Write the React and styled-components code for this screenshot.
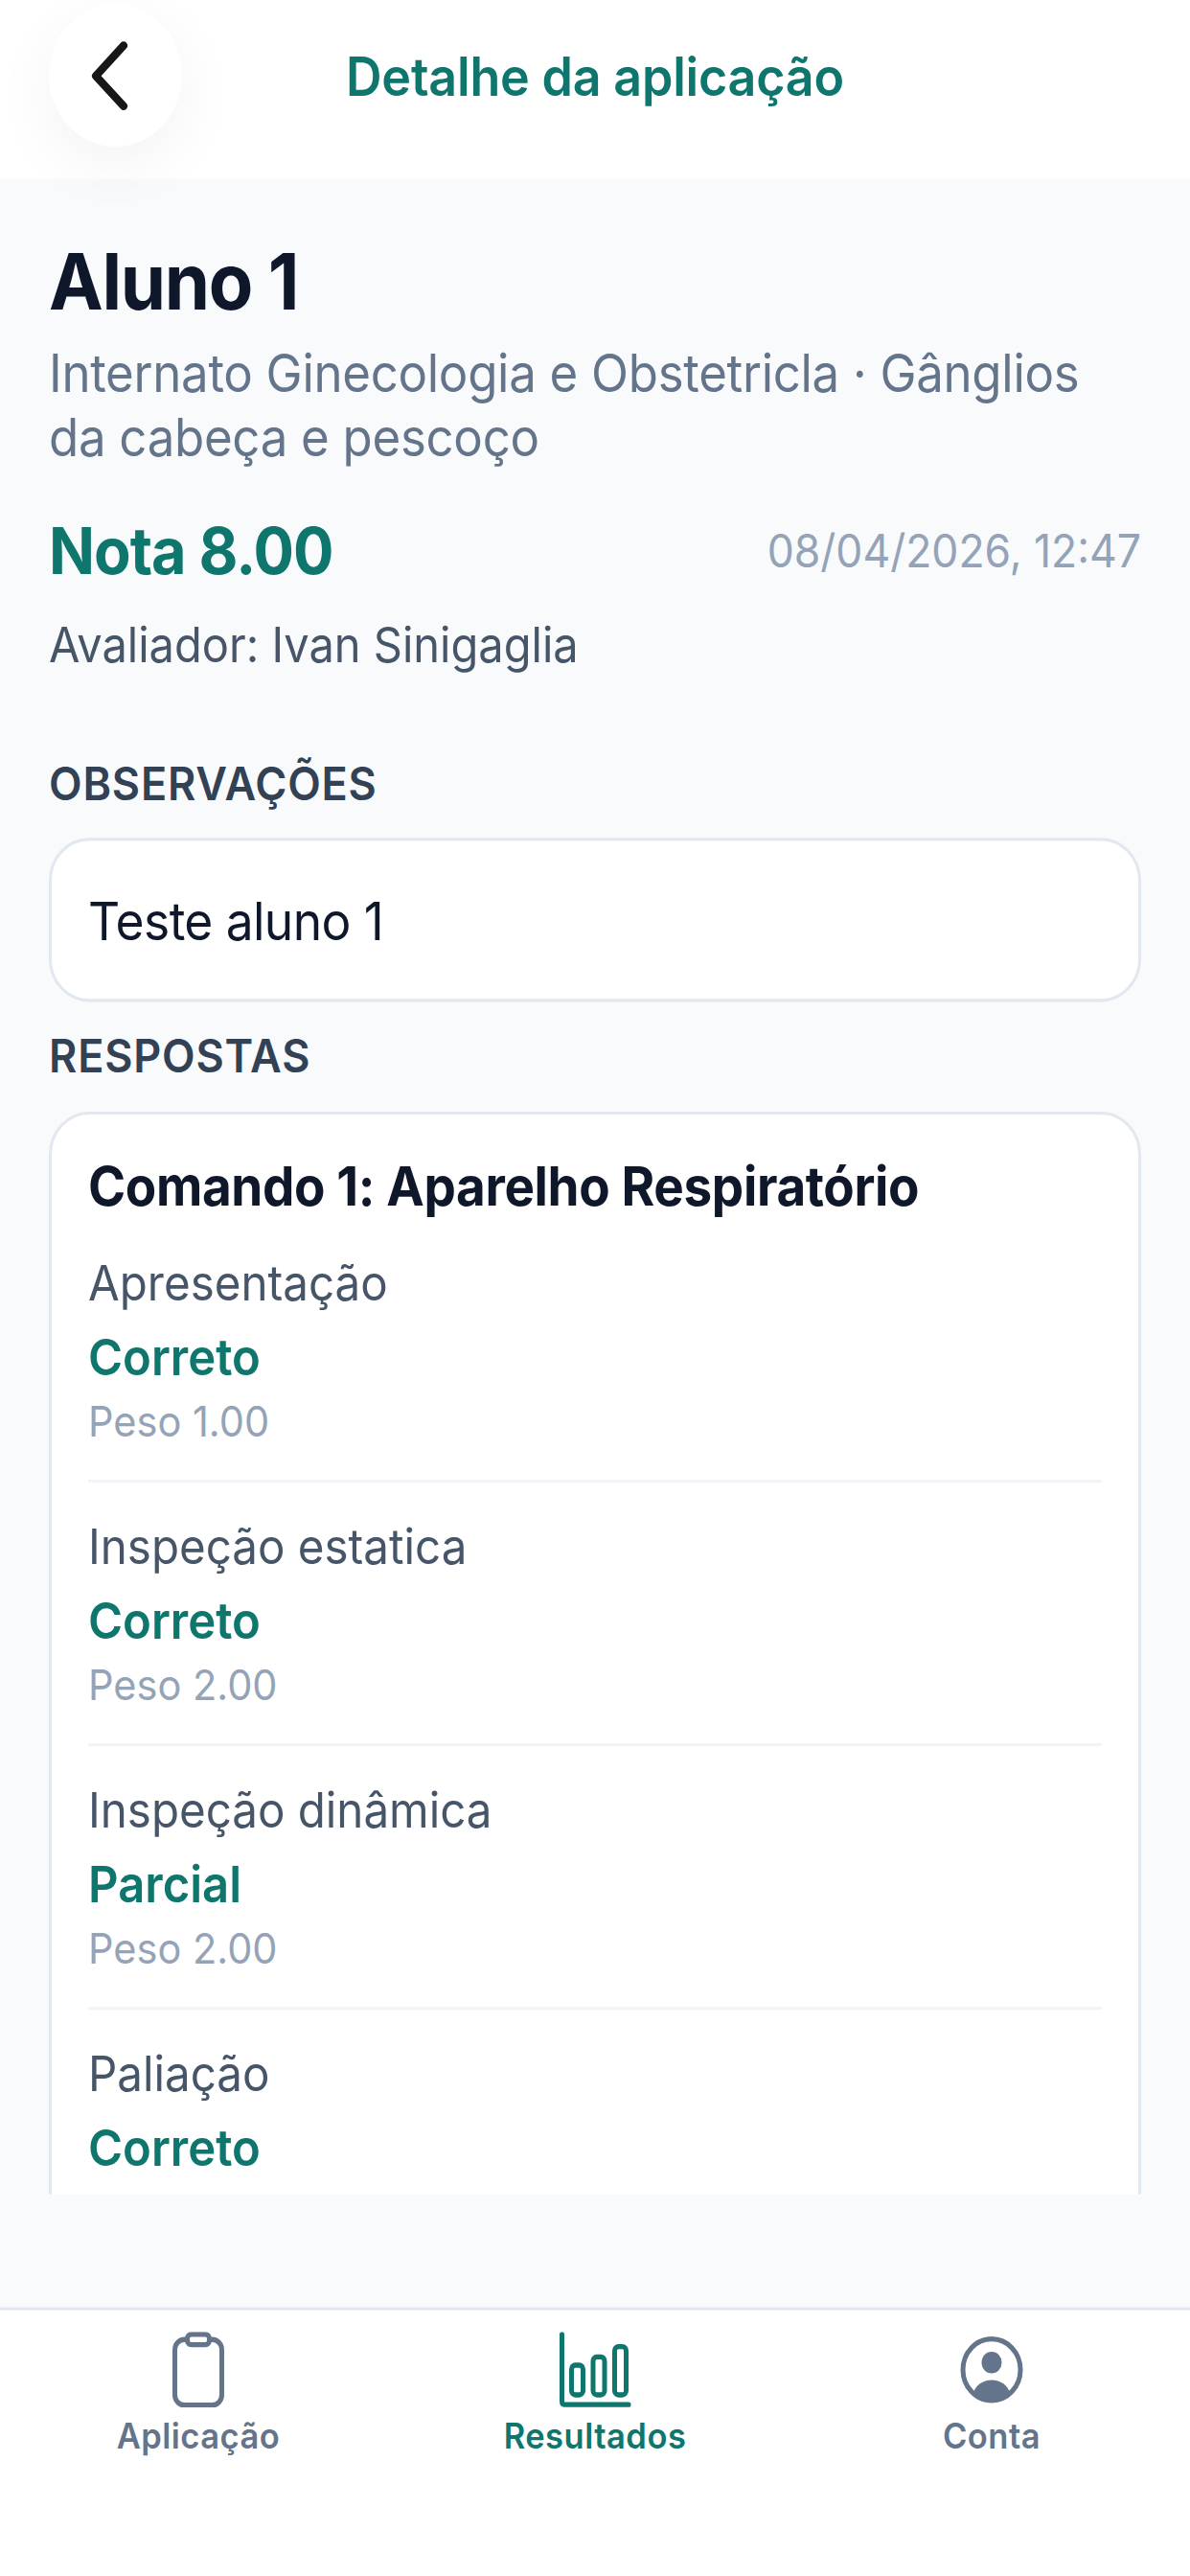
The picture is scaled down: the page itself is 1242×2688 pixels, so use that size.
import React from "react"
import styled, { createGlobalStyle } from "styled-components"

const GlobalStyle = createGlobalStyle`
	html, body, #root {
		margin: 0;
		padding: 0;
		height: 2688px;
		background: #fff;
	}
	* { box-sizing: border-box; }
`

// the reference is stretched about 7% vertically, so the whole page is
const Page = styled.div`
	width: 1242px;
	height: 2512px;
	display: flex;
	flex-direction: column;
	background: #f8fafc;
	font-family: Inter, "Noto Sans", sans-serif;
	transform: scaleY(1.07);
	transform-origin: top left;
`

const Header = styled.header`
	height: 175px;
	flex: none;
	display: grid;
	grid-template-columns: 1fr auto 1fr;
	align-items: start;
	padding: 4px 51px 0;
	background: #fff;
	position: relative;
	z-index: 2;
`

const BackButton = styled.div`
	width: 139px;
	height: 139px;
	border-radius: 50%;
	background: #fff;
	display: flex;
	align-items: center;
	justify-content: center;
	box-shadow: 0 18px 64px rgba(15, 23, 42, .05);
	svg { margin-right: 10px; }
`

const HeaderTitle = styled.h1`
	margin: 0;
	padding-top: 41px;
	font-size: 52px;
	line-height: 60px;
	font-weight: 600;
	letter-spacing: -.2px;
	color: #0f766e;
`

const Scroll = styled.main`
	height: 1965px;
	flex: none;
	overflow: hidden;
	padding: 62px 51px 0;
`

const Name = styled.h2`
	margin: 0;
	font-size: 76px;
	line-height: 74px;
	font-weight: 700;
	letter-spacing: -1.3px;
	color: #0f172a;
`

const Subtitle = styled.p`
	margin: 21px 0 0;
	font-size: 51px;
	line-height: 63px;
	letter-spacing: -.3px;
	color: #64748b;
`

const ScoreRow = styled.div`
	display: flex;
	align-items: center;
	justify-content: space-between;
	margin-top: 41px;
`

const Score = styled.div`
	font-size: 63px;
	line-height: 76px;
	font-weight: 700;
	letter-spacing: -1px;
	color: #0f766e;
`

const DateText = styled.div`
	font-size: 44.5px;
	line-height: 60px;
	color: #94a3b8;
`

const Evaluator = styled.div`
	margin-top: 24px;
	font-size: 47px;
	line-height: 60px;
	color: #475569;
`

const SectionLabel = styled.div`
	margin-top: ${p => p.$top}px;
	font-size: 45px;
	line-height: 54px;
	font-weight: 600;
	letter-spacing: .8px;
	color: #334155;
`

const Card = styled.section`
	margin-top: ${p => p.$top}px;
	padding: ${p => p.$pad};
	background: #fff;
	border: 3px solid #e2e8f0;
	border-radius: 42px;
`

const Note = styled.div`
	font-size: 51.5px;
	line-height: 60px;
	letter-spacing: -.6px;
	color: #0f172a;
`

const CommandTitle = styled.h3`
	margin: 0;
	font-size: 53px;
	line-height: 64px;
	font-weight: 700;
	letter-spacing: -.37px;
	color: #0f172a;
`

const Answer = styled.div`
	padding: 32px 0 29px;
	border-bottom: 3px solid #f1f5f9;
	&:last-child { border-bottom: 0; }
`

const AnswerLabel = styled.div`
	font-size: 47.5px;
	line-height: 60px;
	color: #475569;
`

const AnswerValue = styled.div`
	margin-top: 13px;
	font-size: 49px;
	line-height: 60px;
	font-weight: 600;
	color: #0f766e;
`

const AnswerWeight = styled.div`
	margin-top: 4px;
	font-size: 41.5px;
	line-height: 56px;
	color: #94a3b8;
`

const Nav = styled.nav`
	height: 262px;
	margin-top: auto;
	flex: none;
	display: grid;
	grid-template-columns: repeat(3, 1fr);
	background: #fff;
	border-top: 3px solid #e2e8f0;
`

const NavItem = styled.div`
	display: flex;
	flex-direction: column;
	align-items: center;
	padding-top: 21px;
	color: ${p => (p.$active ? "#0f766e" : "#64748b")};
`

const NavIcon = styled.div`
	height: 74px;
	flex: none;
	display: flex;
	align-items: center;
	justify-content: center;
`

const NavLabel = styled.div`
	margin-top: 5px;
	font-size: 34.5px;
	line-height: 46px;
	font-weight: 600;
	letter-spacing: .5px;
`

const ANSWERS = [
	{ label: "Apresentação", value: "Correto", weight: "Peso 1.00" },
	{ label: "Inspeção estatica", value: "Correto", weight: "Peso 2.00" },
	{ label: "Inspeção dinâmica", value: "Parcial", weight: "Peso 2.00" },
	{ label: "Paliação", value: "Correto" },
]

const ChevronLeft = () => (
	<svg width="46" height="74" viewBox="0 0 46 74" fill="none" stroke="#171717" strokeWidth="8" strokeLinecap="round" strokeLinejoin="round">
		<path d="M36 7.5 L7 37 L36 66.5" />
	</svg>
)

const ClipboardIcon = () => (
	<svg width="56" height="74" viewBox="0 0 56 74" fill="none" stroke="currentColor" strokeWidth="5" strokeLinejoin="round">
		<rect x="3.5" y="7.5" width="49" height="64" rx="10" />
		<rect x="16.5" y="2.5" width="23" height="10" rx="4" fill="#fff" />
	</svg>
)

const ChartIcon = () => (
	<svg width="76" height="74" viewBox="0 0 76 74" fill="none" stroke="currentColor" strokeWidth="5" strokeLinecap="round" strokeLinejoin="round">
		<path d="M3.5 2.5 V68 Q3.5 71 7 71 H73" />
		<rect x="13.5" y="32.5" width="12" height="29" rx="4" />
		<rect x="36" y="24.5" width="12" height="37" rx="4" />
		<rect x="58.5" y="14.5" width="12" height="47" rx="4" />
	</svg>
)

const AccountIcon = () => (
	<svg width="66" height="66" viewBox="0 0 66 66" fill="none">
		<circle cx="33" cy="33" r="30" stroke="currentColor" strokeWidth="5" />
		<circle cx="33" cy="26" r="10.5" fill="currentColor" />
		<path d="M14 56 C16 48 24 43 33 43 C42 43 50 48 52 56 C47 61 40 64 33 64 C26 64 19 61 14 56 Z" fill="currentColor" />
	</svg>
)

export default function App() {
	return <>
		<GlobalStyle />
		<Page>
			<Header>
				<BackButton><ChevronLeft /></BackButton>
				<HeaderTitle>Detalhe da aplicação</HeaderTitle>
			</Header>
			<Scroll>
				<Name>Aluno 1</Name>
				<Subtitle>Internato Ginecologia e Obstetricla · Gânglios da cabeça e pescoço</Subtitle>
				<ScoreRow>
					<Score>Nota 8.00</Score>
					<DateText>08/04/2026, 12:47</DateText>
				</ScoreRow>
				<Evaluator>Avaliador: Ivan Sinigaglia</Evaluator>
				<SectionLabel $top={78}>OBSERVAÇÕES</SectionLabel>
				<Card $top={26} $pad="48px 38px 46px">
					<Note>Teste aluno 1</Note>
				</Card>
				<SectionLabel $top={26}>RESPOSTAS</SectionLabel>
				<Card $top={27} $pad="38px 38px 140px">
					<CommandTitle>Comando 1: Aparelho Respiratório</CommandTitle>
					{ANSWERS.map(a => (
						<Answer key={a.label}>
							<AnswerLabel>{a.label}</AnswerLabel>
							<AnswerValue>{a.value}</AnswerValue>
							{a.weight && <AnswerWeight>{a.weight}</AnswerWeight>}
						</Answer>
					))}
				</Card>
			</Scroll>
			<Nav>
				<NavItem>
					<NavIcon><ClipboardIcon /></NavIcon>
					<NavLabel>Aplicação</NavLabel>
				</NavItem>
				<NavItem $active>
					<NavIcon><ChartIcon /></NavIcon>
					<NavLabel>Resultados</NavLabel>
				</NavItem>
				<NavItem>
					<NavIcon><AccountIcon /></NavIcon>
					<NavLabel>Conta</NavLabel>
				</NavItem>
			</Nav>
		</Page>
	</>
}
